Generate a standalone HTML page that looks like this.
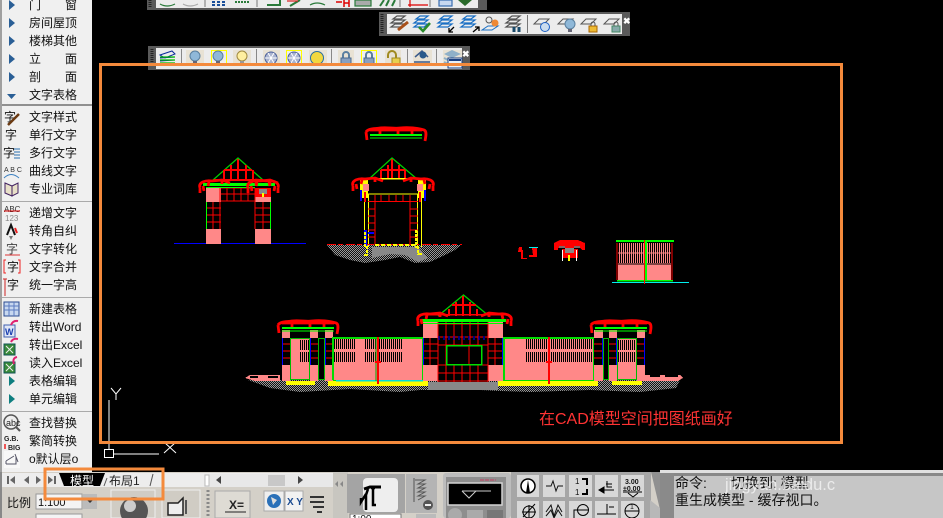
<!DOCTYPE html>
<html><head><meta charset="utf-8"><style>
html,body{margin:0;padding:0;background:#000;width:943px;height:518px;overflow:hidden}
svg{display:block}
text{font-family:"Liberation Sans","WenQuanYi Zen Hei","Noto Sans CJK SC",sans-serif}
.m{font-size:12px;fill:#111}
</style></head><body>
<svg width="943" height="518" viewBox="0 0 943 518" xmlns="http://www.w3.org/2000/svg">
<defs>
<pattern id="dith" width="2" height="2" patternUnits="userSpaceOnUse"><rect width="2" height="2" fill="#111"/><rect width="1" height="1" fill="#9a9a9a"/><rect x="1" y="1" width="1" height="1" fill="#9a9a9a"/></pattern>
<g id="eave"><path d="M0 8C-2 2 6 0 12 1L22 0L30 3M0 8V13M3 6L4 11M9 2L8 6M22 0V4" fill="none" stroke="#f00" stroke-width="2.800"/></g>
<g id="orn"><path d="M2 5C4 1 12 2 16 1C24 0 30 2 36 1C44 0 54 1 60 3C63 4 62 9 61 14M2 5L3 13M16 1V8M34 2V9M48 2V7M6 3H58" fill="none" stroke="#f00" stroke-width="2.800"/><path d="M6 8H58" stroke="#0f0" stroke-width="2"/><path d="M6 11H58" stroke="#0f0"/></g>
<g id="lay"><g fill="none" stroke="#555" stroke-width="1.200"><path d="M3 4L7 1H15L11 4Z"/><path d="M1 8L5 5H15L11 8Z" /><path d="M1 12L5 9H15L11 12Z"/></g></g>
<g id="layB"><g fill="none" stroke="#1a6fc4" stroke-width="1.200"><path d="M3 4L7 1H15L11 4Z"/><path d="M1 8L5 5H15L11 8Z" /><path d="M1 12L5 9H15L11 12Z"/></g></g>
<g id="bulb"><circle cx="0" cy="-2" r="5" fill="#8fb8d8" stroke="#5a7f9e"/><rect x="-2" y="3" width="4" height="3" fill="#667"/></g>
<g id="snow"><circle r="6" fill="#aab4d0" stroke="#4a5f9a"/><path d="M-6 0H6M-3-5L3 5M3-5L-3 5" stroke="#fff"/></g>
<g id="lock"><path d="M-3 2V-3A3 3 0 0 1 3-3V2" fill="none" stroke="#5a7fa0" stroke-width="2"/><rect x="-5" y="0" width="10" height="6" fill="#88a0c0" stroke="#4a6a90"/></g>
<g id="p"><rect width="8" height="51" fill="#f88"/><rect y="8" width="8" height="27" fill="#000"/><path d="M0 14H8M0 21H8M0 28H8" stroke="#f00"/><path d="M0.500 8V35" stroke="#00f"/></g>
</defs>

<rect width="943" height="518" fill="#000"/>

<!-- Gate 1 -->
<g shape-rendering="crispEdges">
<line x1="174" y1="243.500" x2="306" y2="243.500" stroke="#00f"/>
<rect x="206" y="187" width="15" height="57" fill="#f88"/>
<rect x="255" y="188" width="16" height="56" fill="#f88"/>
<rect x="206" y="202" width="15" height="27" fill="#000"/><rect x="255" y="202" width="16" height="27" fill="#000"/>
<path d="M206 208H221M206 215H221M206 222H221M213 202V229M220 187V229M255 208H271M255 215H271M255 222H271M263 202V229M255 188V229" stroke="#f00"/>
<path d="M206.500 202V229M270.500 202V229" stroke="#0f0"/>
<path d="M221 188H255M221 194H255M221 201H255M227 188V201M234 188V201M241 188V201M248 188V201" stroke="#f00"/>
<rect x="255" y="188" width="16" height="9" fill="#f00"/>
<rect x="259" y="189" width="8" height="5" fill="#888"/><rect x="262" y="193" width="2" height="4" fill="#ff0"/>
</g>
<path d="M213 180L238 158L263 180" fill="none" stroke="#0c0" stroke-width="1.300"/>
<g shape-rendering="crispEdges"><path d="M224 170H252M224 170V180M231 165V180M238 159V180M246 165V180M253 170V180" stroke="#f00" stroke-width="2"/><rect x="214" y="179" width="49" height="2" fill="#f00"/><rect x="203" y="183" width="72" height="3" fill="#0f0"/><rect x="206" y="187" width="49" height="1" fill="#0f0"/></g>
<use href="#eave" x="200" y="180"/><use href="#eave" transform="translate(278,180) scale(-1,1)"/>
<use href="#eave" x="248" y="180"/>

<!-- Gate 2 -->
<path d="M327 245L335 255L350 260L365 263L385 260L400 257L415 263L430 262L445 255L455 250L461 245Z" fill="url(#dith)"/>
<path d="M372 247L372 258L390 254L405 255L418 262L428 258L418 247Z" fill="#888"/>
<path d="M369 179L392 158L417 179" fill="none" stroke="#0c0" stroke-width="1.300"/>
<g shape-rendering="crispEdges">
<path d="M381 170H405M381 170V179M388 165V179M392 159V179M399 165V179M405 170V179" stroke="#f00" stroke-width="2"/>
<rect x="369" y="178" width="48" height="1.500" fill="#ff0"/>
<path d="M364.500 194V247M368.500 194V247M417.500 194V247M421.500 194V247M368 194H418" stroke="#ff0"/>
<path d="M368 201.500H418M375 195V245M410 195V245M381 195V202M389 195V202M396 195V202M403 195V202M368 209H375M368 216H375M368 223H375M368 230H375M368 237H375M410 209H418M410 216H418M410 223H418M410 230H418M410 237H418" stroke="#f00"/>
<path d="M327 244.500H462" stroke="#f00" stroke-dasharray="9 2 5 3"/>
<rect x="360" y="180" width="8" height="18" fill="#ff0"/><rect x="418" y="180" width="8" height="18" fill="#ff0"/>
<path d="M361 190V201M425 190V201" stroke="#00f" stroke-width="2"/>
<rect x="363" y="184" width="6" height="7" fill="#f88"/><rect x="417" y="184" width="6" height="7" fill="#f88"/>
<path d="M365 192V202M420 192V202" stroke="#f00" stroke-width="2"/>
<rect x="364" y="230" width="3" height="17" fill="#00f"/><rect x="368" y="232" width="6" height="2" fill="#00f"/>
<path d="M365 232V248M416 230V248M367 246V255M418 246V255" stroke="#ff0" stroke-width="2" stroke-dasharray="3 1"/>
<path d="M364 255H369M418 254H423M375 245H415" stroke="#ff0" stroke-width="2" stroke-dasharray="4 2"/>
</g>
<use href="#eave" x="353" y="178" /><use href="#eave" transform="translate(433,178) scale(-1,1)"/>
<use href="#orn" x="364" y="127"/>

<!-- Mid small -->
<g shape-rendering="crispEdges">
<path d="M519 247H522V250H523V258H527V259H521V252H518Z" fill="#f00"/>
<rect x="529" y="247" width="9" height="1" fill="#0ee"/>
<path d="M532 248H537V257H529V255H533Z" fill="#f00"/>
<path d="M554 243L560 240H578L585 243V250H582L580 248H558V250H554Z" fill="#f00"/>
<path d="M562 249H578V258H562Z" fill="#f00"/><rect x="565" y="248" width="9" height="5" fill="#888"/>
<path d="M562.500 250V261M576.500 250V261" stroke="#fff"/><rect x="568" y="255" width="2" height="6" fill="#ff0"/>
<path d="M559 247H565M574 247H580" stroke="#0cc"/>
<rect x="618" y="265" width="53" height="15" fill="#f88"/>
<line x1="619" y1="253" x2="670" y2="253" stroke="#f88" stroke-width="20" stroke-dasharray="1 1"/>
<path d="M618 253H671M618 264H671" stroke="#f88"/>
<rect x="616" y="240" width="58" height="2" fill="#0f0"/><rect x="617" y="280" width="56" height="1.500" fill="#0f0"/>
<rect x="612" y="282" width="77" height="1" fill="#0ee"/>
<path d="M617 243V280M672 243V280" stroke="#f00"/>
<rect x="644" y="240" width="1" height="44" fill="#f00"/><rect x="645" y="240" width="2" height="40" fill="#0f0"/>
</g>

<!-- Long building -->
<path d="M248 380H680L676 388L640 392L590 390L530 392L500 391L480 390L420 390L400 392L350 389L300 392L270 388Z" fill="url(#dith)"/>
<rect x="428" y="382" width="70" height="8" fill="#888"/>
<g shape-rendering="crispEdges">
<rect x="286" y="381" width="29" height="4" fill="#ff0"/><rect x="328" y="381" width="100" height="5" fill="#ff0"/><rect x="498" y="381" width="100" height="5" fill="#ff0"/><rect x="612" y="381" width="30" height="4" fill="#ff0"/>
<path d="M245 378L250 375H280V381H255Z" fill="#f88"/><path d="M645 375H680L683 378L678 381H645Z" fill="#f88"/>
<path d="M250 377H258M268 377H278M650 376H660M665 376H678" stroke="#000" stroke-width="2"/>

<use href="#p" x="282" y="330"/><use href="#p" x="310" y="330"/><use href="#p" x="325" y="330"/>
<rect x="290" y="338" width="20" height="42" fill="#f88"/><rect x="290.500" y="338.500" width="19" height="41" fill="none" stroke="#0b0"/>
<line x1="300" y1="345" x2="309" y2="345" stroke="#000" stroke-width="10" stroke-dasharray="1 1"/><line x1="300" y1="357" x2="309" y2="357" stroke="#000" stroke-width="10" stroke-dasharray="1 1"/>
<rect x="318" y="338" width="7" height="42" fill="#f88"/><rect x="318.500" y="338.500" width="6" height="41" fill="#000" stroke="#0b0"/>
<rect x="333" y="337" width="90" height="44" fill="#f88"/><rect x="333.500" y="337.500" width="89" height="43" fill="none" stroke="#0d0"/>
<g stroke="#000" stroke-dasharray="1 1" stroke-width="10"><line x1="334" y1="344" x2="355" y2="344"/><line x1="334" y1="357" x2="355" y2="357"/><line x1="365" y1="344" x2="377" y2="344"/><line x1="365" y1="357" x2="377" y2="357"/><line x1="379" y1="344" x2="402" y2="344"/><line x1="379" y1="357" x2="402" y2="357"/></g>
<rect x="333" y="337" width="90" height="2" fill="#0d0"/><rect x="336" y="380" width="87" height="1.500" fill="#0dd"/>
<rect x="377" y="337" width="2" height="47" fill="#f00"/><path d="M376 338V381" stroke="#0a0"/><rect x="375" y="361" width="6" height="2" fill="#f00"/>
<rect x="332" y="337" width="2" height="43" fill="#0d0"/>

<rect x="423" y="322" width="15" height="59" fill="#f88"/><rect x="423" y="338" width="15" height="27" fill="#000"/>
<path d="M423 344H438M423 351H438M423 358H438M430 338V365" stroke="#f00"/><path d="M423.500 338V365" stroke="#00f"/>
<rect x="488" y="322" width="15" height="59" fill="#f88"/><rect x="488" y="338" width="15" height="27" fill="#000"/>
<path d="M488 344H503M488 351H503M488 358H503M495 338V365" stroke="#f00"/><path d="M502.500 338V365" stroke="#00f"/>
<rect x="438" y="322" width="50" height="60" fill="#000"/>
<path d="M438 324H488M438 337H488M438 345H488M438 365H488M438 373H488M438 381H488M446 322V382M454 322V345M462 322V345M470 322V345M478 322V345M454 365V382M462 365V382M470 365V382M478 365V382M438 322V382M488 322V382" stroke="#f00"/>
<path d="M438 337H488M438 339H488" stroke="#00f" stroke-dasharray="2 3"/>
<rect x="446.500" y="345.500" width="35" height="19" fill="#000" stroke="#0d0" stroke-width="1.500"/><path d="M469 346V364" stroke="#f00"/>
</g>
<path d="M438 316L463.500 295L489 316" fill="none" stroke="#0c0" stroke-width="1.300"/>
<g shape-rendering="crispEdges">
<path d="M452 305H476M449 316V309M456 302V316M463 296V316M470 302V316M477 309V316" stroke="#f00" stroke-width="2"/>
<rect x="422" y="314" width="84" height="1.500" fill="#f00"/>
<rect x="422" y="319" width="84" height="3" fill="#0f0"/><rect x="423" y="323" width="80" height="1" fill="#0f0"/>

<rect x="503" y="337" width="91" height="44" fill="#f88"/><rect x="503.500" y="337.500" width="90" height="43" fill="none" stroke="#0d0"/>
<g stroke="#000" stroke-dasharray="1 1" stroke-width="10"><line x1="526" y1="344" x2="548" y2="344"/><line x1="526" y1="357" x2="548" y2="357"/><line x1="551" y1="344" x2="593" y2="344"/><line x1="551" y1="357" x2="593" y2="357"/></g>
<rect x="503" y="337" width="91" height="2" fill="#0d0"/>
<rect x="548" y="337" width="2" height="47" fill="#f00"/><rect x="546" y="361" width="6" height="2" fill="#f00"/>
<rect x="503" y="337" width="2" height="44" fill="#0d0"/>
<g transform="translate(594,330)"><rect width="9" height="51" fill="#f88"/><rect y="8" width="9" height="27" fill="#000"/><path d="M0 14H9M0 21H9M0 28H9" stroke="#f00"/><path d="M8.500 8V35" stroke="#00f"/></g>
<rect x="603" y="338" width="7" height="42" fill="#f88"/><rect x="603.500" y="338.500" width="5" height="41" fill="#000" stroke="#0b0"/>
<g transform="translate(609,330)"><rect width="8" height="51" fill="#f88"/><rect y="8" width="8" height="27" fill="#000"/><path d="M0 14H8M0 21H8M0 28H8" stroke="#f00"/><path d="M7.500 8V35" stroke="#00f"/></g>
<rect x="617" y="338" width="20" height="42" fill="#f88"/><rect x="617.500" y="338.500" width="19" height="41" fill="none" stroke="#0b0"/>
<line x1="618" y1="345" x2="636" y2="345" stroke="#000" stroke-width="10" stroke-dasharray="1 1"/><line x1="618" y1="357" x2="636" y2="357" stroke="#000" stroke-width="10" stroke-dasharray="1 1"/>
<g transform="translate(637,330)"><rect width="8" height="51" fill="#f88"/><rect y="8" width="8" height="27" fill="#000"/><path d="M0 14H8M0 21H8M0 28H8" stroke="#f00"/><path d="M7.500 8V35" stroke="#00f"/></g>
</g>
<use href="#eave" x="418" y="313"/><use href="#eave" transform="translate(511,313) scale(-1,1)"/>
<use href="#orn" x="276" y="320"/><use href="#orn" x="589" y="320"/>

<!-- UCS -->
<g stroke="#fff" fill="none" shape-rendering="crispEdges"><path d="M109 400V449M113 454H159"/><rect x="104.500" y="449.500" width="9" height="8"/></g>
<g stroke="#fff" fill="none"><path d="M111 388L116 394L121 388M116 394V400M164 442L176 453M176 442L164 453"/></g>

<text x="539" y="424" fill="#f33" style="font-size:16px">在CAD模型空间把图纸画好</text>

<!-- Left panel -->
<rect x="0" y="0" width="92" height="472" fill="#f0f0f0"/>
<rect x="0" y="0" width="2" height="472" fill="#a0a0a0"/>
<g shape-rendering="crispEdges"><rect x="2" y="104" width="90" height="2" fill="#909090"/><rect x="2" y="201" width="90" height="1" fill="#aaa"/><rect x="2" y="297" width="90" height="1" fill="#aaa"/><rect x="2" y="411" width="90" height="1" fill="#aaa"/></g>
<g fill="#2a5f96"><path d="M9 0L15 5L9 10Z"/><path d="M9 18L15 23L9 28Z"/><path d="M9 36L15 41L9 46Z"/><path d="M9 54L15 59L9 64Z"/><path d="M9 72L15 77L9 82Z"/><path d="M7 94H16L11.500 99Z"/></g>
<g fill="#0f7f80"><path d="M9 376L15 381L9 386Z"/><path d="M9 394L15 399L9 404Z"/></g>
<g class="m">
<text class="m" x="29" y="9">门</text><text class="m" x="65" y="9">窗</text>
<text class="m" x="29" y="27">房间屋顶</text>
<text class="m" x="29" y="45">楼梯其他</text>
<text class="m" x="29" y="63">立</text><text class="m" x="65" y="63">面</text>
<text class="m" x="29" y="81">剖</text><text class="m" x="65" y="81">面</text>
<text class="m" x="29" y="99">文字表格</text>
<text class="m" x="29" y="121">文字样式</text>
<text class="m" x="29" y="139">单行文字</text>
<text class="m" x="29" y="157">多行文字</text>
<text class="m" x="29" y="175">曲线文字</text>
<text class="m" x="29" y="193">专业词库</text>
<text class="m" x="29" y="217">递增文字</text>
<text class="m" x="29" y="235">转角自纠</text>
<text class="m" x="29" y="253">文字转化</text>
<text class="m" x="29" y="271">文字合并</text>
<text class="m" x="29" y="289">统一字高</text>
<text class="m" x="29" y="313">新建表格</text>
<text class="m" x="29" y="331">转出Word</text>
<text class="m" x="29" y="349">转出Excel</text>
<text class="m" x="29" y="367">读入Excel</text>
<text class="m" x="29" y="385">表格编辑</text>
<text class="m" x="29" y="403">单元编辑</text>
<text class="m" x="29" y="427">查找替换</text>
<text class="m" x="29" y="445">繁简转换</text>
<text class="m" x="29" y="463">o默认层o</text>
</g>
<text class="m" x="4" y="121">字</text><path d="M19 114L11 122L8 125" stroke="#6b3a12" stroke-width="2.500" fill="none"/>
<text class="m" x="5" y="139">字</text>
<text class="m" x="3" y="157">字</text><path d="M14 149H20M14 152H20M14 155H20M14 158H20" stroke="#2a6fb0"/>
<text x="4" y="172" style="font-size:7px" fill="#333">A B C</text><path d="M4 178Q11 171 19 178" fill="none" stroke="#3a7fc0"/>
<path d="M5 183L12 186V196L5 193ZM12 186L18 183V193L12 196Z" fill="#e8e0c8" stroke="#402060"/>
<text x="4" y="212" style="font-size:8px" fill="#333">ABC</text><path d="M4 211H20" stroke="#d00"/><text x="5" y="221" style="font-size:8px" fill="#888">123</text>
<path d="M7 235L11 225L15 235" fill="none" stroke="#111" stroke-width="2"/><path d="M15 228L17 233" stroke="#e22" stroke-width="2"/><path d="M9 236L11 240L13 236" fill="#777"/>
<text class="m" x="6" y="253" style="fill:#444">字</text><path d="M5 255H20" stroke="#d33"/>
<text class="m" x="7" y="271">字</text><path d="M6 260H4V273H6M18 260H20V273H18" fill="none" stroke="#e22"/>
<text class="m" x="7" y="289">字</text><path d="M5 279V296M3 279H7" stroke="#c22"/>
<rect x="4" y="302" width="15" height="14" fill="#c8d8f0" stroke="#2a4a90"/><path d="M4 306H19M4 310H19M9 302V316M14 302V316" stroke="#5a7ac0"/>
<rect x="4" y="325" width="11" height="12" fill="#dfe6f6" stroke="#4060b0"/><text x="5" y="335" style="font-size:9px;font-weight:bold" fill="#1a3fb0">W</text><path d="M11 325Q13 320 18 321" fill="none" stroke="#e02070" stroke-width="2"/>
<rect x="4" y="344" width="11" height="11" fill="#3a8a3a" stroke="#155"/><path d="M6 346L13 353M13 346L6 353" stroke="#eee"/><path d="M11 342Q13 338 18 339" fill="none" stroke="#e02070" stroke-width="2"/>
<rect x="4" y="362" width="11" height="11" fill="#3a8a3a" stroke="#155"/><path d="M6 364L13 371M13 364L6 371" stroke="#eee"/><path d="M17 357Q12 358 14 364" fill="none" stroke="#e02070" stroke-width="2"/>
<circle cx="11" cy="422" r="7" fill="#eee" stroke="#555" stroke-width="1.500"/><path d="M16 427L20 431" stroke="#555" stroke-width="2"/><text x="6" y="426" style="font-size:9px" fill="#222">abc</text>
<text x="4" y="441" style="font-size:7px;font-weight:bold" fill="#222">G.B.</text><text x="8" y="450" style="font-size:7px;font-weight:bold" fill="#222">BIG</text><path d="M5 444V449" stroke="#e22" stroke-width="1.500"/>
<rect x="4" y="451" width="16" height="17" fill="#f8f8f8"/><path d="M6 461L14 456M6 464H16V457M6 461V464M15 454L18 462" fill="none" stroke="#556"/>

<!-- toolbars -->
<g shape-rendering="crispEdges">
<rect x="147" y="0" width="340" height="10" fill="#5a5a5a"/><rect x="156" y="0" width="322" height="8" fill="#ececec"/>
<rect x="379" y="12" width="251" height="24" fill="#5a5a5a"/><rect x="387" y="14" width="235" height="20" fill="#ececec"/>
<rect x="148" y="46" width="322" height="24" fill="#5a5a5a"/><rect x="156" y="48" width="306" height="21" fill="#ececec"/>
<path d="M205 0V7M257 0V7M400 0V7M430 0V7" stroke="#777"/>
<path d="M527.500 15V33" stroke="#777"/>
<path d="M181.500 49V66M256.500 49V66M331.500 49V66M407.500 49V66M436.500 49V66" stroke="#888"/>
<path d="M152 49V67M382 14V33M150 0V8" stroke="#222" stroke-dasharray="1 1" stroke-width="3"/>
</g>
<text x="623" y="24" fill="#fff" style="font-size:9px;font-weight:bold">✖</text>
<text x="462" y="57" fill="#fff" style="font-size:9px;font-weight:bold">✖</text>
<g fill="none" stroke-width="1.200">
<path d="M160 4Q167 8 175 4" stroke="#2a7a3a"/><path d="M183 4Q190 8 198 4" stroke="#aaa"/>
<path d="M212 2H225M212 5H225" stroke="#1a4f9a" stroke-width="2" stroke-dasharray="3 2"/>
<path d="M235 2H250" stroke="#2a7a3a" stroke-width="2" stroke-dasharray="2 1"/>
<path d="M267 5H280V0" stroke="#2a7a3a" stroke-width="2"/><path d="M290 6L300 0" stroke="#2a7a3a" stroke-width="2"/><path d="M287 1H298" stroke="#d22"/>
<path d="M310 5Q317 1 325 5" stroke="#2a7a3a"/><path d="M336 2L342 2M344 0V7M349 0V7M344 3H349" stroke="#d00" stroke-width="1.500"/>
<rect x="355" y="0" width="16" height="6" fill="#aaa" stroke="#2a7a3a"/>
<path d="M380 6L384 0M386 6L389 0M392 6L395 0" stroke="#2a7a3a" stroke-width="2"/>
<path d="M408 5H428M410 0V7" stroke="#d00"/>
<rect x="439" y="0" width="13" height="6" fill="#c8d8f0" stroke="#3a6fb0"/>
<path d="M458 0H472L465 6Z" fill="#2a6a2a" stroke="none"/>
</g>
<use href="#lay" x="390" y="15"/><path d="M408 22L398 30" stroke="#a8501a" stroke-width="3"/>
<use href="#layB" x="413" y="15"/><path d="M419 27L423 31L430 23" fill="none" stroke="#2a8a2a" stroke-width="2.500"/>
<use href="#layB" x="437" y="15"/><path d="M454 27L449 32M449 28V32H453" stroke="#000" fill="none" stroke-width="1.300"/>
<use href="#layB" x="460" y="15"/><path d="M473 32L479 27M475 27H479V31" stroke="#000" fill="none" stroke-width="1.300"/>
<path d="M482 30L488 26H498L492 30Z" fill="none" stroke="#1a6fc4"/><circle cx="489" cy="20" r="3" fill="none" stroke="#555"/><circle cx="495" cy="23" r="3.500" fill="#e83"/>
<use href="#lay" x="505" y="15"/><path d="M514 27V32M519 27V32" stroke="#1a4a6a" stroke-width="3"/>
<path d="M534 24L539 19H549L544 24Z" fill="none" stroke="#555"/><circle cx="545" cy="27" r="4.500" fill="#cde" stroke="#1a5fc4"/>
<path d="M558 24L563 19H573L568 24Z" fill="none" stroke="#555"/><use href="#bulb" x="570" y="26"/>
<path d="M581 24L586 19H596L591 24Z" fill="none" stroke="#555"/><rect x="589" y="26" width="8" height="6" fill="#eb3" stroke="#a60"/><path d="M591 26V24A2 2 0 0 1 595 24V26" fill="none" stroke="#555"/>
<path d="M604 24L609 19H619L614 24Z" fill="none" stroke="#555"/><rect x="612" y="26" width="8" height="6" fill="#8aa" stroke="#486"/><path d="M614 26V24A2 2 0 0 1 618 24V26" fill="none" stroke="#555"/>
<g shape-rendering="crispEdges"><rect x="186" y="50" width="18" height="14" fill="#e8e2d4"/><rect x="211.500" y="50.500" width="15" height="15" fill="#eee" stroke="#ff0"/><rect x="233" y="50" width="18" height="14" fill="#e8e2d4"/><rect x="263" y="50" width="17" height="14" fill="#e8e2d4"/><rect x="286.500" y="50.500" width="15" height="15" fill="#eee" stroke="#ff0"/><rect x="309" y="50" width="18" height="14" fill="#e8e2d4"/><rect x="338" y="50" width="16" height="14" fill="#e8e2d4"/><rect x="361.500" y="50.500" width="15" height="15" fill="#eee" stroke="#ff0"/><rect x="385" y="50" width="16" height="14" fill="#e8e2d4"/><rect x="413" y="50" width="19" height="14" fill="#e8e2d4"/><rect x="443" y="50" width="19" height="14" fill="#e8e2d4"/></g>
<path d="M160 55L172 51L175 54L165 58ZM160 58L175 57M160 61L175 60" fill="none" stroke="#0a2a9a"/><path d="M160 57H175M160 60H175M160 63H175" stroke="#0b0" stroke-width="1.300"/>
<use href="#bulb" x="195" y="58"/><use href="#bulb" x="218" y="58"/>
<g transform="translate(242,58)"><circle cy="-2" r="5" fill="#ffefa0" stroke="#a08a40"/><rect x="-2" y="3" width="4" height="3" fill="#999"/></g>
<use href="#snow" x="271" y="58"/><use href="#snow" x="294" y="58"/>
<circle cx="317" cy="58" r="6.500" fill="#f2d840" stroke="#2a6fa0"/>
<use href="#lock" x="346" y="58"/><use href="#lock" x="369" y="58"/>
<g transform="translate(393,58)"><path d="M-5 0V-3A4 4 0 0 1 3-3V2" fill="none" stroke="#a08a20" stroke-width="2"/><rect x="-1" y="0" width="8" height="6" fill="#e8d050" stroke="#a08a20"/></g>
<path d="M415 57L422 51L428 57M414 62H430M416 65H428" fill="none" stroke="#3a5a8a" stroke-width="1.500"/><circle cx="423" cy="55" r="3.500" fill="#2a5a8a"/>
<path d="M444 54L452 50L461 54L452 58Z" fill="#8fb0c8"/><path d="M444 58L452 62M444 62L452 66" stroke="#8fb0c8" stroke-width="2"/><rect x="448" y="58" width="14" height="10" fill="#e8f0f8" stroke="#1a3f80"/><rect x="449" y="59" width="12" height="2" fill="#1a3f80"/>

<!-- orange rect -->
<rect x="100.500" y="64.500" width="741" height="378" fill="none" stroke="#f48a3c" stroke-width="3"/>

<!-- Bottom panel -->
<rect x="0" y="472" width="660" height="46" fill="#d4d0c8"/>
<rect x="0" y="472" width="2" height="46" fill="#888"/>
<rect x="2" y="473" width="331" height="14" fill="#ededed"/>
<g fill="#666"><path d="M7 476H9V484H7ZM15 476V484L10 480Z"/><path d="M29 476V484L24 480Z"/><path d="M36 476L41 480L36 484Z"/><path d="M48 476L53 480L48 484ZM54 476H56V484H54Z"/></g>
<path d="M59 473H105L100 486H64Z" fill="#000"/>
<text x="70" y="485" fill="#fff" style="font-size:12px">模型</text>
<text x="109" y="485" fill="#222" style="font-size:12px">布局1</text>
<path d="M150 486L153 474" stroke="#555"/><path d="M104 486L107 478" stroke="#555"/>
<rect x="204" y="474" width="129" height="13" fill="#e8e8e8"/>
<rect x="205" y="475" width="4" height="11" fill="#fff" stroke="#bbb"/>
<rect x="268" y="475" width="17" height="11" fill="#c8c8c8"/>
<path d="M221 476L216 480L221 484Z" fill="#444"/><path d="M298 476L303 480L298 484Z" fill="#444"/>

<text x="7" y="507" fill="#111" style="font-size:12px">比例</text>
<rect x="36" y="494" width="46" height="15" fill="#f4f4f4" stroke="#999"/>
<text x="38" y="506" fill="#111" style="font-size:11px">1:100</text>
<rect x="83" y="494" width="14" height="15" fill="#bbb"/><path d="M86 499H94L90 503Z" fill="#333"/>
<rect x="36" y="514" width="46" height="8" fill="#f4f4f4" stroke="#999"/>
<rect x="111" y="490" width="44" height="28" fill="#d0ccc4" stroke="#eee"/>
<circle cx="134" cy="511" r="14" fill="#555"/><circle cx="130" cy="506" r="6" fill="#ccc"/>
<rect x="162" y="490" width="38" height="28" fill="#d0ccc4" stroke="#eee"/>
<path d="M168 503H178L183 498V515H168Z" fill="#eee" stroke="#222" stroke-width="1.500"/><path d="M186 500V514" stroke="#555" stroke-width="2"/>
<path d="M208 490V518" stroke="#888" stroke-width="3" stroke-dasharray="2 2"/>
<rect x="215" y="491" width="35" height="27" fill="#dedbd4" stroke="#aaa"/>
<text x="229" y="509" fill="#222" style="font-size:12px;font-weight:bold">X=</text><path d="M225 512H246" stroke="#222"/>
<rect x="264" y="491" width="20" height="20" fill="#eee" stroke="#aaa"/><circle cx="274" cy="501" r="7" fill="#2a70b8"/><path d="M271 497L277 500L273 505Z" fill="#ddd"/>
<rect x="285" y="491" width="18" height="20" fill="#f2f2f2" stroke="#aaa"/>
<text x="287" y="505" fill="#1a4a90" style="font-size:10px;font-weight:bold">X Y</text>
<path d="M310 497H324M310 502H324M313 507H324M317 512H322" stroke="#333" stroke-width="2"/>

<rect x="333" y="472" width="15" height="46" fill="#c8c6c0"/>
<path d="M338 481L335 484L338 487ZM343 481L340 484L343 487Z" fill="#888"/>
<rect x="347" y="474" width="58" height="39" fill="#a4a4a4"/>
<rect x="363" y="478" width="35" height="34" rx="4" fill="#eee"/>
<path d="M364 489L370 487H381" stroke="#000" stroke-width="3" fill="none"/>
<path d="M366 494L361 502V498M368 489L366 495V510M371 488L375 488M373 489V505H376" stroke="#000" stroke-width="2.500" fill="none"/>
<rect x="406" y="474" width="31" height="39" fill="#b4b4b4"/>
<path d="M414 478V502" stroke="#555"/><path d="M415 480L425 480L418 484L425 484L418 488L425 488L418 492L425 492L418 496L425 496L418 500" fill="none" stroke="#555"/>
<circle cx="428" cy="505" r="5" fill="#555"/><rect x="425" y="504" width="6" height="2" fill="#eee"/>
<rect x="350" y="514" width="51" height="5" fill="#fff" stroke="#777"/>
<text x="352" y="522" fill="#111" style="font-size:10px">1:00</text>
<rect x="416" y="514" width="20" height="4" fill="#bbb"/>

<rect x="443" y="473" width="68" height="45" rx="3" fill="#bcbcbc"/>
<rect x="446" y="477" width="60" height="41" fill="#8e8e8e"/>
<rect x="448" y="483" width="54" height="22" fill="#000" stroke="#d4d4d4" stroke-width="1.500"/>
<path d="M462 491H491M462 491L469 498L476 491" fill="none" stroke="#ccc"/>
<path d="M480 480H496" stroke="#a67" stroke-dasharray="4 1" stroke-width="2"/>
<circle cx="455" cy="515" r="7" fill="#aaa"/><rect x="467" y="510" width="16" height="8" fill="#aaa"/><rect x="487" y="510" width="16" height="8" fill="#777"/>

<rect x="511" y="472" width="140" height="46" fill="#a6a6a6"/>
<g fill="#d8d8d8"><rect x="517" y="475" width="22" height="22"/><rect x="543" y="475" width="22" height="22"/><rect x="569" y="475" width="23" height="22"/><rect x="595" y="475" width="23" height="22"/><rect x="621" y="475" width="23" height="22"/><rect x="517" y="501" width="22" height="17"/><rect x="543" y="501" width="22" height="17"/><rect x="569" y="501" width="23" height="17"/><rect x="595" y="501" width="23" height="17"/><rect x="621" y="501" width="23" height="17"/></g>
<circle cx="528" cy="486" r="7" fill="#fff" stroke="#000" stroke-width="1.500"/><path d="M526 493L528 480L530 493Z" fill="#000"/>
<path d="M546 486H551L553 481L556 491L558 486H563" fill="none" stroke="#111"/>
<text x="575" y="484" fill="#111" style="font-size:8px">1</text><text x="575" y="495" fill="#111" style="font-size:8px">1</text><path d="M582 479H587V485M582 494H587V489" fill="none" stroke="#000" stroke-width="2"/>
<path d="M599 490H614M604 487L599 490L604 493Z" stroke="#000" fill="#000"/><path d="M607 481V487H612M606 484H612" fill="none" stroke="#000"/>
<text x="625" y="484" fill="#111" style="font-size:7px;font-weight:bold">3.00</text><text x="623" y="491" fill="#111" style="font-size:7px;font-weight:bold">±0.00</text><path d="M623 492H642M628 493L633 497L638 493" fill="none" stroke="#000"/>
<circle cx="529" cy="512" r="6" fill="none" stroke="#000"/><path d="M522 512H536M529 505V518M523 517L535 504" stroke="#000"/>
<path d="M546 512L551 505L554 516L558 505L562 512M546 516L551 510L554 518L558 510L562 516" fill="none" stroke="#111"/>
<circle cx="583" cy="510" r="5.500" fill="none" stroke="#000"/><path d="M574 518V510H578M578 510H588" fill="none" stroke="#000"/>
<path d="M597 514H616M607 504V514M609 507H614" fill="none" stroke="#000"/>
<circle cx="632" cy="511" r="7" fill="none" stroke="#000"/><path d="M625 511H639" stroke="#000"/><text x="630" y="509" fill="#111" style="font-size:7px">1</text>

<path d="M651 472H673V476L674 518H662Z" fill="#909090"/>
<path d="M650 500L660 508L672 518H650Z" fill="#b8b8b8"/>

<!-- command panel -->
<rect x="660" y="470" width="283" height="3" fill="#e0e0e0"/>
<rect x="660" y="473" width="283" height="4" fill="#888"/>
<rect x="660" y="473" width="14" height="45" fill="#8a8a8a"/>
<rect x="674" y="476" width="269" height="42" fill="#c6c6c6"/>
<text x="675" y="488" fill="#111" style="font-size:14px">命令:</text>
<text x="731" y="488" fill="#111" style="font-size:14px">切换到: 模型</text>
<text x="675" y="505" fill="#111" style="font-size:14px">重生成模型 - 缓存视口。</text>
<text x="725" y="490" fill="#fff" fill-opacity="0.65" style="font-size:16.500px">jingyan.baidu.c</text>

<!-- orange tab highlight -->
<rect x="45" y="469" width="118" height="30" fill="none" stroke="#f48a3c" stroke-width="3"/>
</svg>
</body></html>
